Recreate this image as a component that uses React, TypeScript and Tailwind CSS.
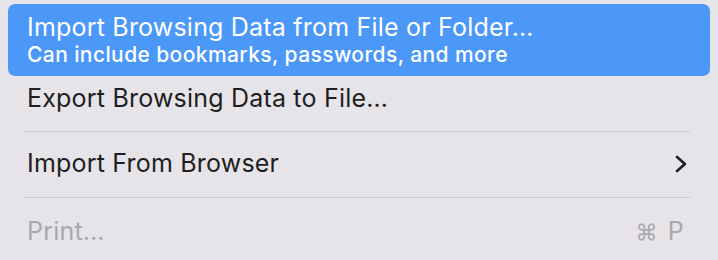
const font = { fontFamily: 'Inter, "Noto Sans", sans-serif' };

function Separator() {
  return (
    <div className="h-[18px] flex items-center pl-[24px] pr-[28px]">
      <div className="h-px w-full bg-[#cdcbcf]" />
    </div>
  );
}

export default function App() {
  return (
    <div className="w-[718px] h-[260px] bg-[#e6e4e8] overflow-hidden" style={font}>
      <div className="px-[8px] pt-[4px]">
        <div className="h-[72px] rounded-[7px] bg-[#4b98f9] text-white pl-[19px] flex flex-col justify-center">
          <p className="text-[25px] leading-[30px] tracking-[0.2px]">Import Browsing Data from File or Folder…</p>
          <p className="text-[21px] leading-[26px] font-medium tracking-[0.4px]">Can include bookmarks, passwords, and more</p>
        </div>
      </div>

      <div className="h-[46px] flex items-center pl-[27px] text-[25px] tracking-[0.2px] text-[#1f1e21]">
        Export Browsing Data to File…
      </div>

      <Separator />

      <div className="h-[48px] flex items-center justify-between pl-[27px] pr-[30px] text-[25px] tracking-[0.2px] text-[#1f1e21]">
        <span>Import From Browser</span>
        <svg width="14" height="18" viewBox="0 0 14 18" fill="none">
          <path d="M3 2 L11 9 L3 16" stroke="#1f1e21" strokeWidth="2.6" strokeLinecap="round" strokeLinejoin="round" />
        </svg>
      </div>

      <Separator />

      <div className="h-[52px] flex items-center justify-between pl-[27px] pr-[34px] text-[25px] tracking-[0.2px] text-[#a9a8ab]">
        <span>Print…</span>
        <span className="flex items-center gap-[10px]">
          <span className="text-[22px]">⌘</span>
          <span>P</span>
        </span>
      </div>
    </div>
  );
}
